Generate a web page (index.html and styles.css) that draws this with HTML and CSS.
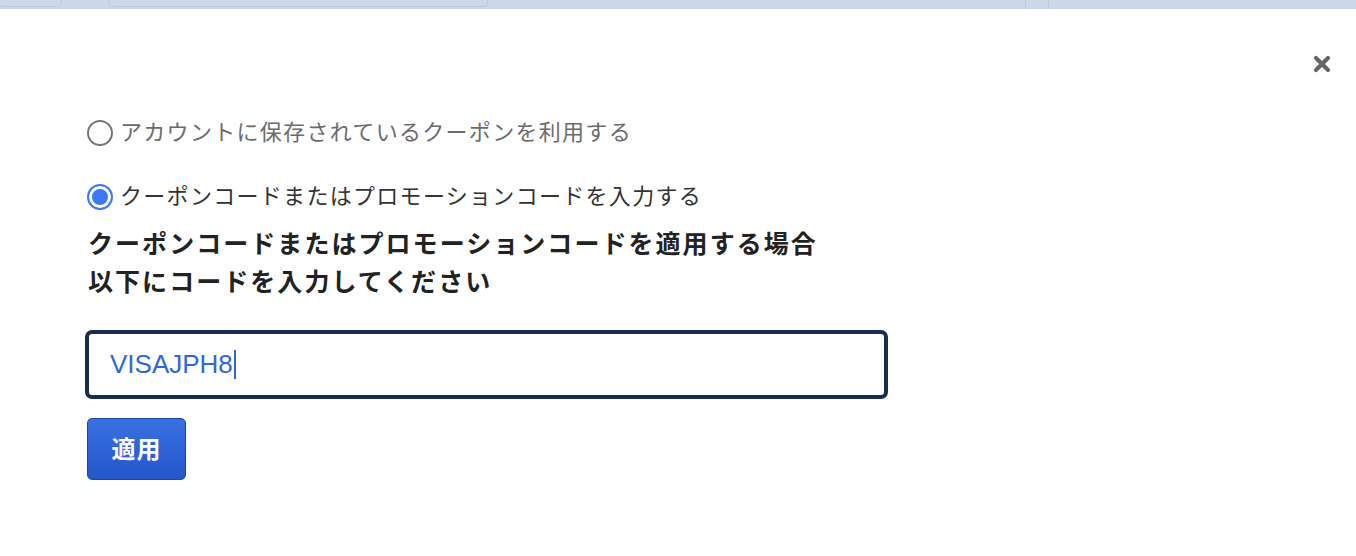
FILE: index.html
```html
<!DOCTYPE html>
<html lang="ja">
<head>
<meta charset="utf-8">
<title>クーポン</title>
<link rel="stylesheet" href="styles.css">
</head>
<body>
<div class="topbar">
  <div class="tb-box tb-box1"></div>
  <div class="tb-box tb-box2"></div>
  <div class="tb-sep tb-sep1"></div>
  <div class="tb-sep tb-sep2"></div>
</div>
<div class="modal">
  <div class="modal-header">
    <button class="close" aria-label="閉じる">
      <svg width="18" height="18" viewBox="0 0 18 18"><path d="M3 3 L15 15 M15 3 L3 15" stroke="#666" stroke-width="4.2" stroke-linecap="round" fill="none"/></svg>
    </button>
  </div>
  <div class="content">
    <label class="option muted"><span class="radio"></span><span class="label-text">アカウントに保存されているクーポンを利用する</span></label>
    <label class="option selected"><span class="radio checked"></span><span class="label-text">クーポンコードまたはプロモーションコードを入力する</span></label>
    <p class="heading">クーポンコードまたはプロモーションコードを適用する場合<br>以下にコードを入力してください</p>
    <div class="code-input"><span class="code-value">VISAJPH8</span><span class="caret"></span></div>
    <button class="apply">適用</button>
  </div>
</div>
</body>
</html>
```
FILE: styles.css
```css
* { box-sizing: border-box; }
html, body { margin: 0; padding: 0; background: #fff; }
body {
  font-family: "Noto Sans CJK JP", "Noto Sans", sans-serif;
  width: 1356px;
  height: 556px;
  overflow: hidden;
}
.topbar {
  height: 9px;
  background: #c9d9e8;
  display: flex;
  align-items: flex-start;
}
.tb-box {
  height: 7px;
  border: 1px solid #b9cadb;
  border-top: none;
  border-radius: 0 0 5px 5px;
}
.tb-box1 { width: 64px; margin-left: -2px; }
.tb-box2 { width: 380px; margin-left: 46px; }
.tb-sep { width: 1px; height: 9px; background: #b9cadb; }
.tb-sep1 { margin-left: 537px; }
.tb-sep2 { margin-left: 22px; }

.modal { position: relative; }
.modal-header {
  display: flex;
  justify-content: flex-end;
  padding: 46px 25px 0 0;
  height: 109px;
}
.close {
  width: 18px;
  height: 18px;
  padding: 0;
  border: none;
  background: none;
  display: block;
}
.close svg { display: block; }

.content {
  padding-left: 87px;
  display: flex;
  flex-direction: column;
  align-items: flex-start;
}
.option {
  display: flex;
  align-items: center;
  height: 30px;
  font-size: 22px;
  letter-spacing: 1.3px;
  line-height: 30px;
}
.label-text { padding-bottom: 6px; }
.option + .option { margin-top: 34px; }
.option.muted { color: #6b6b6b; }
.option.selected { color: #333; }
.radio {
  width: 26px;
  height: 26px;
  border-radius: 50%;
  border: 2px solid #767676;
  background: #fff;
  margin-right: 7px;
  flex: none;
}
.radio.checked {
  border-color: #3b78f2;
  background: #3b78f2;
  box-shadow: inset 0 0 0 3px #fff;
}
.heading {
  margin: 11px 0 0 1px;
  font-size: 25px;
  font-weight: 700;
  line-height: 38px;
  letter-spacing: 2.05px;
  color: #222;
}
.code-input {
  margin: 31px 0 0 -2px;
  width: 803px;
  height: 69px;
  border: 4px solid #152d52;
  border-radius: 7px;
  display: flex;
  align-items: center;
  padding-left: 21px;
}
.code-value {
  font-family: "Liberation Sans", Arial, sans-serif;
  font-size: 26px;
  color: #2f67dc;
}
.caret {
  width: 2px;
  height: 29px;
  background: #2f67dc;
  margin-left: 1px;
}
.apply {
  margin-top: 19px;
  width: 99px;
  height: 62px;
  border: 1px solid #1b46a6;
  border-radius: 5px;
  background: linear-gradient(#3a71e2, #2456c9);
  color: #fff;
  font-family: "Noto Sans CJK JP", sans-serif;
  font-size: 24px;
  font-weight: 700;
  letter-spacing: 1px;
  padding: 0 0 3px;
}
```
